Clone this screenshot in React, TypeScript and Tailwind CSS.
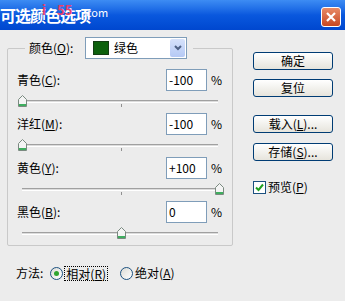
import React from 'react';

const font = { fontFamily: '"Noto Sans CJK SC", "Liberation Sans", sans-serif' };

const Slider = ({ pct }: { pct: number }) => (
  <div className="relative ml-[10px] w-[206px] h-[22px]">
    <div className="absolute left-[4px] right-[6px] top-[9px] h-[3px] border-t border-[#a0a0a0] border-b border-b-white bg-[#dcdcdc]" />
    <div className="absolute left-[103px] top-[13px] w-px h-[3px] bg-[#909090]" />
    <div className="absolute top-[4px] w-[9px] h-[12px]" style={{ left: `${pct * 197}px` }}>
      <svg width="9" height="12" viewBox="0 0 9 12">
        <path d="M0.5 4.5 L4.5 0.5 L8.5 4.5 L8.5 11.5 L0.5 11.5 Z" fill="#f4f4f4" stroke="#7a8a80" />
        <rect x="1" y="9" width="7" height="2" fill="#3fae5f" />
      </svg>
    </div>
  </div>
);

const Row = ({ label, k, value, pct }: { label: string; k: string; value: string; pct: number }) => (
  <div>
    <div className="flex items-center h-[22px]">
      <div className="w-[158px] pl-[9px]">
        {label}(<span className="underline">{k}</span>):
      </div>
      <div className="w-[41px] h-[22px] bg-white border border-[#7f9db9] pl-[2px] leading-[20px]">{value}</div>
      <div className="ml-[4px]">%</div>
    </div>
    <Slider pct={pct} />
  </div>
);

const Btn = ({ children, mt }: { children: React.ReactNode; mt: string }) => (
  <div className={`${mt} w-[80px] h-[18px] rounded-[3px] border border-[#003c74] bg-gradient-to-b from-white to-[#e6e4dc] flex items-center justify-center leading-none`}>
    {children}
  </div>
);

export default function App() {
  return (
    <div className="w-[345px] h-[301px] bg-[#ececec] text-[12px] text-black overflow-hidden" style={font}>
      {/* title bar */}
      <div className="relative h-[30px] bg-gradient-to-b from-[#3d8cf3] via-[#0a58de] to-[#0047cf] flex items-center">
        <span className="ml-0 text-white font-bold text-[16px] tracking-[-1px]">可选颜色选项</span>
        <span className="absolute left-[42px] top-0 text-[#e8406a] font-bold text-[13px]">i</span>
        <span className="absolute left-[57px] top-0 text-[#e8406a] font-bold text-[13px]">55</span>
        <span className="absolute left-[83px] top-[7px] text-white text-[11px] leading-none">.com</span>
        <div className="absolute left-[321px] top-[7px] w-[20px] h-[20px] rounded-[3px] border border-white bg-gradient-to-b from-[#e88a66] to-[#c64620] flex items-center justify-center">
          <svg width="12" height="12" viewBox="0 0 12 12">
            <path d="M2 2 L10 10 M10 2 L2 10" stroke="white" strokeWidth="2.2" />
          </svg>
        </div>
      </div>

      <div className="flex">
        {/* left column */}
        <div className="w-[240px] pl-[7px] pt-[18px]">
          <div className="w-[226px] border border-[#c9c9c9] rounded-[2px]">
            <div className="-mt-[12px] ml-[17px] flex items-center h-[22px] w-[168px] bg-[#ececec]">
              <div className="w-[60px] pl-[4px]">
                颜色(<span className="underline">O</span>):
              </div>
              <div className="w-[102px] h-[22px] bg-white border border-[#7f9db9] flex items-center">
                <div className="ml-[7px] w-[16px] h-[14px] bg-[#0d610d] border border-[#143d14]" />
                <span className="ml-[5px]">绿色</span>
                <div className="ml-auto mr-px w-[15px] h-[18px] rounded-[2px] bg-gradient-to-b from-[#d6e2fb] to-[#b5c9f5] flex items-center justify-center">
                  <svg width="8" height="6" viewBox="0 0 8 6">
                    <path d="M1 1 L4 4 L7 1" stroke="#4d6185" strokeWidth="2" fill="none" />
                  </svg>
                </div>
              </div>
            </div>
            <div className="mt-[10px]">
              <Row label="青色" k="C" value="-100" pct={0} />
              <Row label="洋红" k="M" value="-100" pct={0} />
              <Row label="黄色" k="Y" value="+100" pct={1} />
              <Row label="黑色" k="B" value="0" pct={0.5} />
            </div>
          </div>

          <div className="mt-[19px] flex items-center h-[16px] pl-[9px]">
            <span>方法:</span>
            <div className="ml-[7px] w-[13px] h-[13px] rounded-full border border-[#1c5180] bg-gradient-to-br from-[#dcdcd6] to-white flex items-center justify-center">
              <div className="w-[5px] h-[5px] rounded-full bg-[#2fa52f]" />
            </div>
            <span className="ml-[1px] px-[1px] border border-dotted border-black leading-[13px]">
              相对(<span className="underline">R</span>)
            </span>
            <div className="ml-[12px] w-[13px] h-[13px] rounded-full border border-[#1c5180] bg-gradient-to-br from-[#dcdcd6] to-white" />
            <span className="ml-[2px]">
              绝对(<span className="underline">A</span>)
            </span>
          </div>
        </div>

        {/* right column */}
        <div className="pl-[13px] pt-[22px]">
          <Btn mt="mt-0">确定</Btn>
          <Btn mt="mt-[9px]">复位</Btn>
          <Btn mt="mt-[18px]">
            载入(<span className="underline">L</span>)...
          </Btn>
          <Btn mt="mt-[10px]">
            存储(<span className="underline">S</span>)...
          </Btn>
          <div className="mt-[17px] flex items-center">
            <div className="w-[13px] h-[13px] border border-[#1c5180] bg-white flex items-center justify-center">
              <svg width="9" height="9" viewBox="0 0 9 9">
                <path d="M1 4.5 L3.5 7 L8 1.5" stroke="#21a121" strokeWidth="2" fill="none" />
              </svg>
            </div>
            <span className="ml-[2px]">
              预览(<span className="underline">P</span>)
            </span>
          </div>
        </div>
      </div>
    </div>
  );
}
